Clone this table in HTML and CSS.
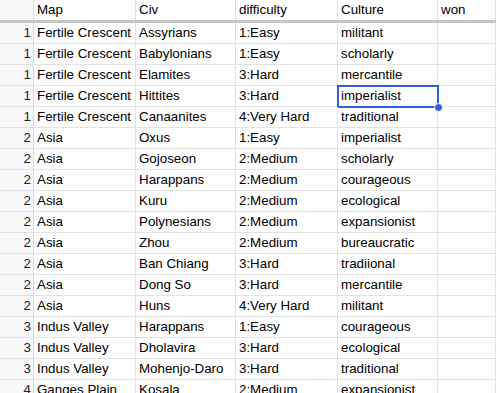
FILE: index.html
```html
<!DOCTYPE html>
<html>
<head>
<meta charset="utf-8">
<link rel="stylesheet" href="styles.css">
</head>
<body>
<div class="sheet">
  <div class="row head">
    <div class="cell num"></div><div class="cell">Map</div><div class="cell">Civ</div><div class="cell">difficulty</div><div class="cell">Culture</div><div class="cell">won</div>
  </div>
  <div class="freeze"></div>
  <div class="row"><div class="cell num">1</div><div class="cell">Fertile Crescent</div><div class="cell">Assyrians</div><div class="cell">1:Easy</div><div class="cell">militant</div><div class="cell"></div></div>
  <div class="row"><div class="cell num">1</div><div class="cell">Fertile Crescent</div><div class="cell">Babylonians</div><div class="cell">1:Easy</div><div class="cell">scholarly</div><div class="cell"></div></div>
  <div class="row"><div class="cell num">1</div><div class="cell">Fertile Crescent</div><div class="cell">Elamites</div><div class="cell">3:Hard</div><div class="cell">mercantile</div><div class="cell"></div></div>
  <div class="row"><div class="cell num">1</div><div class="cell">Fertile Crescent</div><div class="cell">Hittites</div><div class="cell">3:Hard</div><div class="cell selected">imperialist<span class="handle"></span></div><div class="cell"></div></div>
  <div class="row"><div class="cell num">1</div><div class="cell">Fertile Crescent</div><div class="cell">Canaanites</div><div class="cell">4:Very Hard</div><div class="cell">traditional</div><div class="cell"></div></div>
  <div class="row"><div class="cell num">2</div><div class="cell">Asia</div><div class="cell">Oxus</div><div class="cell">1:Easy</div><div class="cell">imperialist</div><div class="cell"></div></div>
  <div class="row"><div class="cell num">2</div><div class="cell">Asia</div><div class="cell">Gojoseon</div><div class="cell">2:Medium</div><div class="cell">scholarly</div><div class="cell"></div></div>
  <div class="row"><div class="cell num">2</div><div class="cell">Asia</div><div class="cell">Harappans</div><div class="cell">2:Medium</div><div class="cell">courageous</div><div class="cell"></div></div>
  <div class="row"><div class="cell num">2</div><div class="cell">Asia</div><div class="cell">Kuru</div><div class="cell">2:Medium</div><div class="cell">ecological</div><div class="cell"></div></div>
  <div class="row"><div class="cell num">2</div><div class="cell">Asia</div><div class="cell">Polynesians</div><div class="cell">2:Medium</div><div class="cell">expansionist</div><div class="cell"></div></div>
  <div class="row"><div class="cell num">2</div><div class="cell">Asia</div><div class="cell">Zhou</div><div class="cell">2:Medium</div><div class="cell">bureaucratic</div><div class="cell"></div></div>
  <div class="row"><div class="cell num">2</div><div class="cell">Asia</div><div class="cell">Ban Chiang</div><div class="cell">3:Hard</div><div class="cell">tradiional</div><div class="cell"></div></div>
  <div class="row"><div class="cell num">2</div><div class="cell">Asia</div><div class="cell">Dong So</div><div class="cell">3:Hard</div><div class="cell">mercantile</div><div class="cell"></div></div>
  <div class="row"><div class="cell num">2</div><div class="cell">Asia</div><div class="cell">Huns</div><div class="cell">4:Very Hard</div><div class="cell">militant</div><div class="cell"></div></div>
  <div class="row"><div class="cell num">3</div><div class="cell">Indus Valley</div><div class="cell">Harappans</div><div class="cell">1:Easy</div><div class="cell">courageous</div><div class="cell"></div></div>
  <div class="row"><div class="cell num">3</div><div class="cell">Indus Valley</div><div class="cell">Dholavira</div><div class="cell">3:Hard</div><div class="cell">ecological</div><div class="cell"></div></div>
  <div class="row"><div class="cell num">3</div><div class="cell">Indus Valley</div><div class="cell">Mohenjo-Daro</div><div class="cell">3:Hard</div><div class="cell">traditional</div><div class="cell"></div></div>
  <div class="row"><div class="cell num">4</div><div class="cell">Ganges Plain</div><div class="cell">Kosala</div><div class="cell">2:Medium</div><div class="cell">expansionist</div><div class="cell"></div></div>
</div>
</body>
</html>
```
FILE: styles.css
```css
* { box-sizing: border-box; }
html, body { margin: 0; padding: 0; background: #fff; }
body { overflow: hidden; }
.sheet {
  font-family: "Liberation Sans", Arial, sans-serif;
  font-size: 13.33px;
  color: #000;
  width: 496px;
}
.row {
  display: grid;
  grid-template-columns: 34px 102px 100px 102px 100px 1fr;
  height: 21px;
}
.cell {
  border-right: 1px solid #e2e3e3;
  border-bottom: 1px solid #e2e3e3;
  line-height: 20px;
  padding: 0 3px;
  white-space: nowrap;
  overflow: visible;
  position: relative;
}
.num {
  background: #f8f9fa;
  text-align: right;
  padding-right: 2px;
  border-right-color: #d6d8da;
  color: #1f1f1f;
}
.head { height: 20px; }
.head .cell { border-bottom: none; }
.freeze {
  height: 3px;
  background: #c4c7c5;
}
.selected::after {
  content: "";
  position: absolute;
  top: -1px;
  left: -1px;
  right: -2px;
  bottom: -2px;
  border: 2px solid #2f5fd6;
  pointer-events: none;
}
.handle {
  position: absolute;
  right: -6px;
  bottom: -6px;
  width: 9px;
  height: 9px;
  border-radius: 50%;
  background: #2f5fd6;
  border: 1px solid #fff;
  z-index: 2;
}
```
